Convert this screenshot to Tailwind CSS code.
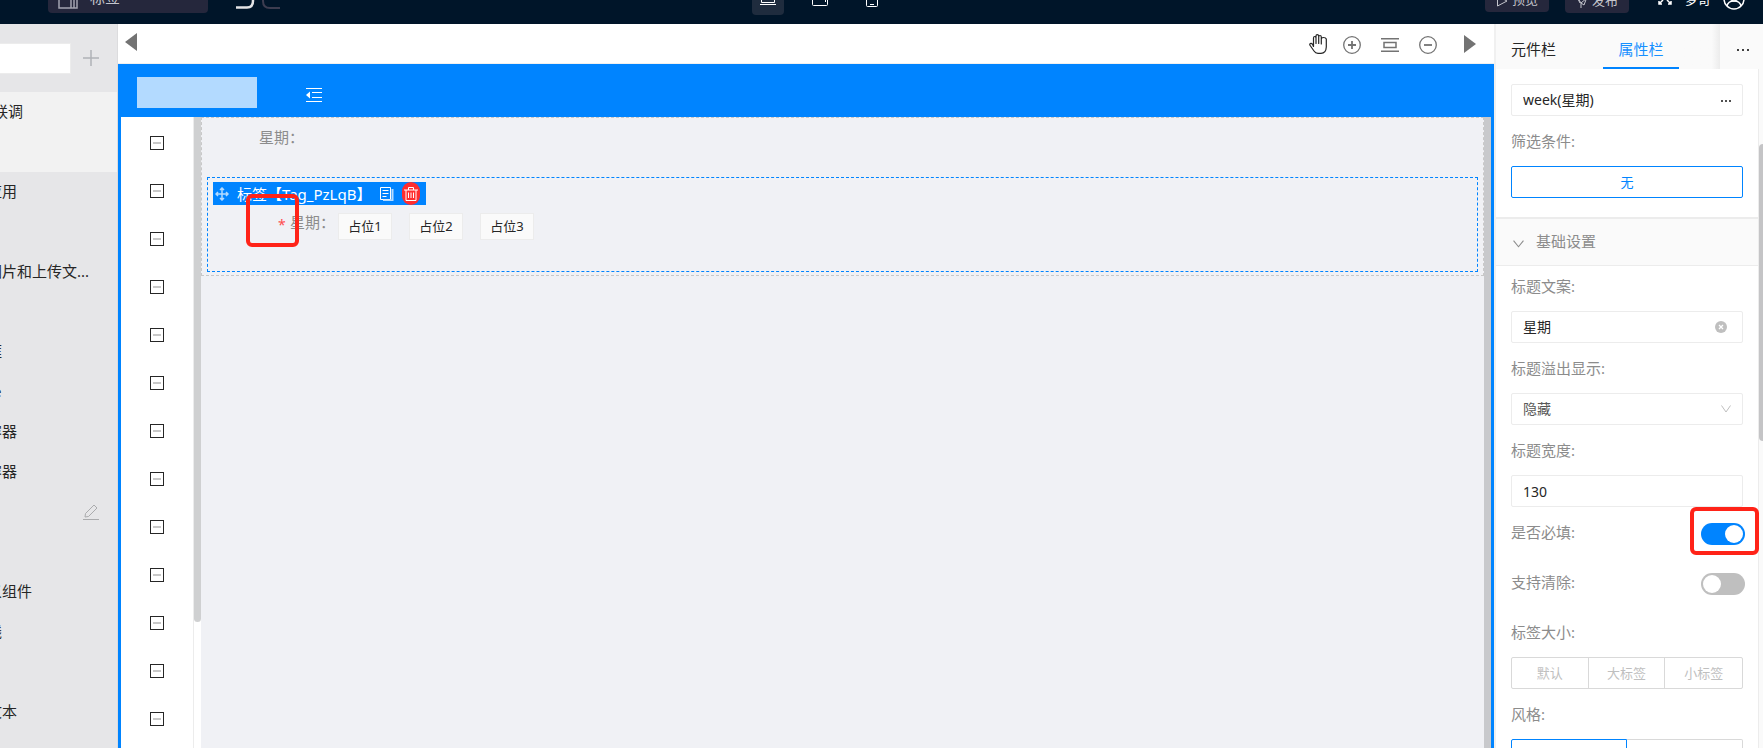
<!DOCTYPE html>
<html lang="zh-CN">
<head>
    <meta charset="UTF-8">
    <meta name="viewport" content="width=device-width, initial-scale=1.0">
    <title>页面设计器</title>
    <script src="https://cdn.jsdelivr.net/npm/@tailwindcss/browser@4"></script>
    <style>
        body { font-family: "Noto Sans", "Noto Sans CJK SC", sans-serif; }
    </style>
</head>
<body class="h-screen overflow-hidden flex flex-col bg-white text-[15px] text-[#262626]">

    <!-- Top bar -->
    <header class="h-6 shrink-0 overflow-hidden bg-[#001529] flex items-end text-[#c4c5cc] relative z-10">
        <div class="flex-1 h-full flex items-end pl-[18px]">
            <button class="ml-[30px] mb-[11px] w-40 h-9 rounded bg-[#25273c] flex items-end gap-3 pl-[10px] leading-6">
                <svg class="w-5 h-6 mb-[2px]" viewBox="0 0 20 24" fill="none" stroke="#a3a4b0" stroke-width="1.5"><path d="M1 0V21H19V0M13 0V21M16 0V21" /></svg>
                <span class="mb-1">标签</span>
            </button>
            <button aria-label="撤销" class="ml-7 mb-[15px] w-5 h-5"><svg viewBox="0 0 20 20" fill="none" stroke="#e4e4e6" stroke-width="2.5"><path d="M4 5H12Q17 6 17 12Q17 18.500 11 18.500H0" /></svg></button>
            <button aria-label="重做" class="ml-[6px] mb-[15px] w-5 h-5"><svg viewBox="0 0 20 20" fill="none" stroke="#3d3d50" stroke-width="2"><path d="M16 5H6Q1 6 1 12Q1 19 8 19H18" /></svg></button>
        </div>
        <div class="w-[260px] flex gap-5 items-end text-white">
            <button aria-label="桌面" class="w-8 h-8 mb-[9px] rounded-sm bg-[#1f2c3e] flex items-end justify-center pb-[10px]"><svg class="w-4 h-4" viewBox="0 0 16 16" fill="none" stroke="currentColor"><path d="M1.500 2.500H14.500V13.500H1.500ZM0 15.500H16" /></svg></button>
            <button aria-label="平板" class="w-8 h-8 mb-[9px] flex items-end justify-center pb-[9px]"><svg class="w-4 h-4" viewBox="0 0 16 16" fill="none" stroke="currentColor"><rect x=".5" y=".5" width="15" height="15" rx="1" /><path d="M13.500 9V12" /></svg></button>
            <button aria-label="手机" class="w-8 h-8 mb-[9px] flex items-end justify-center pb-2"><svg class="w-3 h-4" viewBox="0 0 12 16" fill="none" stroke="currentColor"><rect x=".5" y=".5" width="11" height="15" rx="1" /><path d="M4 13.500H8" /></svg></button>
        </div>
        <div class="flex-1 h-full flex items-end justify-end pr-[18px]">
            <button class="w-16 h-8 mb-3 rounded bg-[#25273c] flex items-end justify-center gap-1 pb-1 text-[13px] leading-[18px]"><svg class="w-3 h-3 mb-[1px]" viewBox="0 0 12 12" fill="none" stroke="currentColor"><path d="M1.500 1 11 6 1.500 11Z" /></svg>预览</button>
            <button class="w-16 h-8 mb-[11px] ml-4 rounded bg-[#25273c] flex items-end justify-center gap-1 pb-1 text-[13px] leading-[18px]"><svg class="w-3 h-3 mb-[1px]" viewBox="0 0 12 12" fill="none" stroke="currentColor"><path d="M1 1 11 1 8 9 5 7ZM5 7V12M1 1 4 7M11 2 5 7" /></svg>发布</button>
            <button aria-label="全屏" class="w-4 h-4 ml-7 mb-[18px]"><svg viewBox="0 0 16 16" fill="none" stroke="#fff" stroke-width="1.5"><path d="M2 2 6 6M14 2 10 6M6 10 2 14M10 10 14 14M2 11V14H5M11 14H14V11" /></svg></button>
            <span class="ml-3 mb-4 text-[13px] leading-[18px] text-white">梦奇</span>
            <svg class="w-[22px] h-[22px] ml-3 mb-[14px]" viewBox="0 0 22 22" fill="none" stroke="#fff" stroke-width="1.500"><circle cx="11" cy="11" r="10" /><circle cx="11" cy="9" r="4" /><path d="M4 18Q5 13 11 13T18 18" /></svg>
        </div>
    </header>

    <div class="flex-1 min-h-0 flex">

        <!-- Page tree, scrolled to the right -->
        <aside class="w-[118px] shrink-0 overflow-hidden bg-[#e6e6e8] border-r border-[#dcdcde] whitespace-nowrap">
            <div class="h-[68px] flex items-center gap-3">
                <input type="text" aria-label="搜索" class="w-[71px] h-[31px] bg-white border border-l-0 border-[#ececec]">
                <button aria-label="新增" class="w-4 h-4"><svg viewBox="0 0 16 16" fill="none" stroke="#b0b2b6" stroke-width="1.5"><path d="M8 0V16M0 8H16" /></svg></button>
            </div>
            <ul class="leading-[38px]">
                <li class="h-20 bg-[#f2f2f2]"><span class="-ml-[7px]">联调</span></li>
                <li class="h-20"><span class="-ml-[13px]">应用</span></li>
                <li class="h-20"><span class="-ml-[13px]">图片和上传文...</span></li>
                <li class="h-10"><span class="-ml-[13px]">框</span></li>
                <li class="h-10"><span class="-ml-[13px]">re</span></li>
                <li class="h-10"><span class="-ml-[13px]">容器</span></li>
                <li class="h-10"><span class="-ml-[13px]">容器</span></li>
                <li class="h-20 flex justify-end pr-[18px] pt-3">
                    <button aria-label="编辑" class="w-4 h-4"><svg viewBox="0 0 16 16" fill="none" stroke="#aaabad"><path d="M2 13 2.500 9.500 11 1 14 4 5.500 12.500ZM0 15.500H16" /></svg></button>
                </li>
                <li class="h-10"><span class="-ml-[13px]">义组件</span></li>
                <li class="h-20"><span class="-ml-[13px]">线</span></li>
                <li class="h-10"><span class="-ml-[13px]">文本</span></li>
            </ul>
        </aside>

        <!-- Canvas -->
        <main class="flex-1 min-w-0 flex flex-col">
            <div class="h-10 shrink-0 border-b border-[#f0f0f0] flex items-center justify-between pl-[7px] pr-[18px] text-[#737373]">
                <button aria-label="向左" class="w-3 h-[18px] mb-1"><svg viewBox="0 0 12 18" fill="currentColor"><path d="M12 0V18L0 9Z" /></svg></button>
                <div class="flex items-center gap-5 pt-[2px]">
                    <button aria-label="拖动" class="w-[18px] h-5 mb-[2px] -mr-1"><svg viewBox="0 0 18 20" fill="none" stroke="#262626" stroke-width="1.2" stroke-linejoin="round" stroke-linecap="round"><path d="M4.500 12.500V4Q4.500 2.500 5.700 2.500T7 4V9.500M7 9V2Q7 .7 8.300 .7T9.700 2V9.500M9.700 3Q9.700 1.500 11 1.500T12.300 3V10M12.300 5Q12.300 3.500 14.500 3.500T17.300 5V13Q17 19.300 12 19.300H9Q6.500 19.300 5 17L.8 11Q.5 9.500 2 9.300T4.500 12.500" /></svg></button>
                    <button aria-label="放大" class="w-[18px] h-[18px]"><svg viewBox="0 0 18 18" fill="none" stroke="currentColor" stroke-width="1.300"><circle cx="9" cy="9" r="8.300" /><path d="M5 9H13M9 5V13" stroke-width="1.800" /></svg></button>
                    <button aria-label="适应宽度" class="w-[18px] h-[14px]"><svg viewBox="0 0 18 14" fill="none" stroke="currentColor" stroke-width="1.500"><path d="M0 .7H18M0 13.300H18M3 4.500H15V9.500H3Z" /></svg></button>
                    <button aria-label="缩小" class="w-[18px] h-[18px]"><svg viewBox="0 0 18 18" fill="none" stroke="currentColor" stroke-width="1.300"><circle cx="9" cy="9" r="8.300" /><path d="M5 9H13" stroke-width="1.800" /></svg></button>
                    <button aria-label="向右" class="w-3 h-[18px] ml-[7px] mb-[2px]"><svg viewBox="0 0 12 18" fill="currentColor"><path d="M0 0V18L12 9Z" /></svg></button>
                </div>
            </div>

            <div class="flex-1 min-h-0 flex flex-col border-x-3 border-[#0084ff]">
                <div class="h-[53px] shrink-0 bg-[#0084ff] flex items-center pl-4 pt-1">
                    <div class="w-[120px] h-[31px] bg-[#b3daff]"></div>
                    <button aria-label="收起菜单" class="w-4 h-[14px] ml-[49px] mt-1"><svg viewBox="0 0 16 14" fill="none" stroke="#fff"><path d="M0 .5H16M6 4.500H16M6 9.500H16M0 13.500H16" /><path d="M4 3.500V10.500L0 7Z" fill="#fff" stroke="none" /></svg></button>
                </div>

                <div class="flex-1 min-h-0 flex">
                    <nav id="menu" class="w-[73px] shrink-0 overflow-hidden border-r border-[#ececec] pt-[2px]"></nav>
                    <div class="w-[7px] shrink-0"><div class="h-[505px] bg-[#cfd0d1] rounded-b-sm"></div></div>

                    <section class="flex-1 min-w-0 bg-[#f0f1f5] text-[#8c8c8c]">
                        <div class="h-[159px] border border-dashed border-[#c8c8c8] px-[5px]">
                            <div class="h-[59px] pl-[52px] pt-2 leading-[22px]">星期：</div>
                            <div class="relative h-[95px] border border-dashed border-[#0084ff] pl-[5px] pt-1">
                                <div class="w-[213px] h-[23px] bg-[#0084ff] flex items-center pl-[2px] text-white">
                                    <svg class="w-[14px] h-[14px] mr-2" viewBox="0 0 14 14" fill="none" stroke="#b3daff" stroke-width="1.500"><path d="M7 1V13M1 7H13M5 3 7 1 9 3M5 11 7 13 9 11M3 5 1 7 3 9M11 5 13 7 11 9" /></svg>
                                    <span class="flex-1 min-w-0 leading-[22px] whitespace-nowrap">标签【Tag_PzLqB】</span>
                                    <button aria-label="复制" class="shrink-0 w-[14px] h-[14px] mr-2"><svg viewBox="0 0 14 14" fill="none" stroke="#fff"><path d="M.5 .5H10.500V12.500H.5ZM2.500 3.500H8.500M2.500 6.500H8.500M2.500 9.500H6.500" /><path d="M12.500 2V13.500H3" stroke="#b3daff" stroke-width="2" /></svg></button>
                                    <button aria-label="删除" class="shrink-0 w-[18px] h-[23px] mr-[6px] rounded-full bg-[#ff2d2f] flex items-center justify-center"><svg class="w-[14px] h-[14px]" viewBox="0 0 14 14" fill="none" stroke="#fff"><path d="M0 3H14M4.500 3V.5H9.500V3M2 3V13.500H12V3M4.500 5.500V11M7 5.500V11M9.500 5.500V11" /></svg></button>
                                </div>
                                <div class="flex items-start pl-[65px]">
                                    <span class="w-3 leading-10 text-[14px] text-[#ff4d4f]">*</span>
                                    <span class="w-12 leading-[34px] whitespace-nowrap">星期：</span>
                                    <div class="flex gap-[17px] pt-2 text-[13px] text-[#262626]">
                                        <span class="w-[54px] h-[27px] leading-6 text-center bg-[#fafafa] border border-[#ececec]">占位1</span>
                                        <span class="w-[54px] h-[27px] leading-6 text-center bg-[#fafafa] border border-[#ececec]">占位2</span>
                                        <span class="w-[54px] h-[27px] leading-6 text-center bg-[#fafafa] border border-[#ececec]">占位3</span>
                                    </div>
                                </div>
                                <div class="absolute left-[38px] top-4 w-[53px] h-[53px] border-4 border-[#ff2318] rounded-md"></div>
                            </div>
                        </div>
                    </section>
                    <div class="w-[7px] shrink-0 bg-[#c8c9cc]"></div>
                </div>
            </div>
        </main>

        <!-- Property panel -->
        <aside class="w-[269px] shrink-0 flex flex-col border-l-2 border-[#f0f0f0]">
            <div class="h-[45px] shrink-0 bg-[#fafafa] flex leading-[50px]">
                <button class="w-[107px] pl-[15px] text-left">元件栏</button>
                <button class="w-[76px] h-[45px] border-b-2 border-[#0084ff] text-[#1890ff]">属性栏</button>
                <div class="flex-1 bg-linear-to-r from-[#fafafa] from-80% to-[#ececec]"></div>
                <button aria-label="更多" class="w-[43px] flex items-center justify-center pl-[2px] pt-[6px]"><svg class="w-3 h-[2px]" viewBox="0 0 12 2" fill="#404040"><path d="M0 0H2V2H0ZM5 0H7V2H5ZM10 0H12V2H10Z" /></svg></button>
            </div>
            <div class="flex-1 min-h-0 overflow-hidden flex">
                <form class="flex-1 min-w-0 border-r border-[#ececec] text-[#8c8c8c] leading-[22px]">
                    <div class="pt-[15px] px-[15px] pb-[19px]">
                        <div class="relative">
                            <input type="text" aria-label="字段" value="week(星期)" class="block w-full h-8 px-[11px] pb-[2px] text-[14px] text-[#262626] border border-[#ececec] rounded-xs">
                            <svg class="absolute right-3 top-4 w-[10px] h-[2px]" viewBox="0 0 10 2" fill="#505050"><path d="M0 0H2V2H0ZM4 0H6V2H4ZM8 0H10V2H8Z" /></svg>
                        </div>
                        <div class="mt-[14px] mb-[14px]">筛选条件:</div>
                        <button type="button" class="block w-full h-8 text-[13px] text-[#0084ff] border border-[#0084ff] rounded-xs">无</button>
                    </div>
                    <div class="h-[49px] bg-[#fafafa] border-t-2 border-b border-[#ececec] flex items-center gap-3 pl-[17px] pb-[2px]">
                        <svg class="w-[11px] h-2 mt-[6px]" viewBox="0 0 10 7" fill="none" stroke="#8c8c8c"><path d="M.5 .5 5 6 9.500 .5" /></svg>
                        基础设置
                    </div>
                    <div class="pt-[9px] px-[15px]">
                        <label for="title" class="block mb-[14px]">标题文案:</label>
                        <div class="relative mb-[14px]">
                            <input id="title" type="text" value="星期" class="block w-full h-8 px-[11px] pb-[2px] text-[14px] text-[#262626] border border-[#ececec] rounded-xs">
                            <svg class="absolute right-4 top-[10px] w-3 h-3" viewBox="0 0 12 12"><circle cx="6" cy="6" r="6" fill="#bfbfbf" /><path d="M4 4 8 8M8 4 4 8" stroke="#fff" stroke-width="1.300" /></svg>
                        </div>
                        <label for="overflow" class="block mb-[14px]">标题溢出显示:</label>
                        <div class="relative mb-[14px]">
                            <select id="overflow" class="block appearance-none w-full h-8 px-[11px] text-[14px] text-[#595959] border border-[#ececec] rounded-xs">
                                <option>隐藏</option>
                            </select>
                            <svg class="absolute right-3 top-3 w-[10px] h-2" viewBox="0 0 10 8" fill="none" stroke="#bfbfbf"><path d="M.5 .5 5 7 9.500 .5" /></svg>
                        </div>
                        <label for="width" class="block mb-[14px]">标题宽度:</label>
                        <input id="width" type="text" value="130" class="block w-full h-8 px-[11px] mb-[14px] text-[14px] text-[#262626] border border-[#ececec] rounded-xs">
                        <div class="relative h-6 mb-[26px] flex items-center justify-between">
                            <label for="required" class="pb-[2px]">是否必填:</label>
                            <input id="required" type="checkbox" checked class="appearance-none w-11 h-[22px] -mr-[2px] mt-[2px] rounded-full bg-[#bfbfbf] checked:bg-[#0084ff] before:block before:w-[18px] before:h-[18px] before:m-[2px] before:rounded-full before:bg-white checked:before:ml-6">
                            <div class="absolute -right-4 -top-[14px] w-[69px] h-12 border-4 border-[#ff2318] rounded-md"></div>
                        </div>
                        <div class="h-6 mb-[26px] flex items-center justify-between">
                            <label for="clearable" class="pb-[2px]">支持清除:</label>
                            <input id="clearable" type="checkbox" class="appearance-none w-11 h-[22px] -mr-[2px] mt-[2px] rounded-full bg-[#bfbfbf] checked:bg-[#0084ff] before:block before:w-[18px] before:h-[18px] before:m-[2px] before:rounded-full before:bg-white checked:before:ml-6">
                        </div>
                        <div class="mb-[14px]">标签大小:</div>
                        <div class="grid grid-cols-3 h-8 mb-[14px] text-[13px] text-[#bfbfbf] border border-[#d9d9d9] rounded-xs divide-x divide-[#d9d9d9]">
                            <button type="button">默认</button>
                            <button type="button">大标签</button>
                            <button type="button">小标签</button>
                        </div>
                        <div class="mb-[14px]">风格:</div>
                        <div class="grid grid-cols-2 h-8">
                            <button type="button" aria-label="风格一" class="border border-[#0084ff] rounded-l-xs"></button>
                            <button type="button" aria-label="风格二" class="border border-l-0 border-[#d9d9d9] rounded-r-xs"></button>
                        </div>
                    </div>
                </form>
                <div class="w-1 shrink-0 bg-[#fafafa] pt-[75px]"><div class="h-[297px] bg-[#c4c4c6] rounded-l-sm"></div></div>
            </div>
        </aside>
    </div>

    <script>
        // Collapsed menu: one box per entry
        const menu = document.getElementById('menu');
        for (let i = 0; i < 13; i++) {
            menu.innerHTML += `
                <button aria-label="菜单 ${i + 1}" class="w-full h-12 flex items-center pl-[29px]">
                    <span class="w-[14px] h-[14px] border border-[#262626] flex items-center justify-center"><span class="w-2 h-[2px] bg-[#c8c8c8]"></span></span>
                </button>`;
        }
    </script>
</body>
</html>
